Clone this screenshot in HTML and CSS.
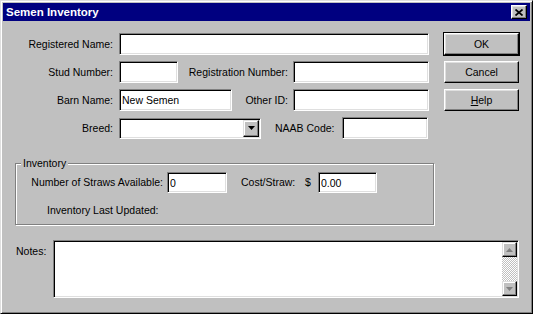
FILE: index.html
```html
<!DOCTYPE html>
<html lang="en">
<head>
    <meta charset="UTF-8">
    <title>Semen Inventory</title>
    <link rel="stylesheet" href="styles.css">
</head>
<body>
    <div class="window">
        <div class="titlebar">
            <span class="title">Semen Inventory</span>
            <span class="close-btn">
                <svg width="8" height="7" viewBox="0 0 8 7"><path d="M0.5 0.5l7 6M7.5 0.5l-7 6" stroke="#000" stroke-width="1.7"/></svg>
            </span>
        </div>

        <div class="client">
            <div class="top">
                <div class="fields">
                    <div class="row">
                        <label class="lbl lbl-main">Registered Name:</label>
                        <input class="field" style="width:310px" type="text" value="">
                    </div>
                    <div class="row">
                        <label class="lbl lbl-main">Stud Number:</label>
                        <input class="field" style="width:59px" type="text" value="">
                        <label class="lbl lbl-mid" style="width:110px">Registration Number:</label>
                        <input class="field" style="width:136px" type="text" value="">
                    </div>
                    <div class="row">
                        <label class="lbl lbl-main">Barn Name:</label>
                        <input class="field" style="width:113px" type="text" value="New Semen">
                        <label class="lbl lbl-mid" style="width:56px">Other ID:</label>
                        <input class="field" style="width:136px" type="text" value="">
                    </div>
                    <div class="row">
                        <label class="lbl lbl-main">Breed:</label>
                        <div class="select">
                            <span class="select-val"></span>
                            <span class="select-btn">
                                <svg width="7" height="4" viewBox="0 0 7 4"><path d="M0 0h7L3.5 4z" fill="#000"/></svg>
                            </span>
                        </div>
                        <label class="lbl lbl-naab">NAAB Code:</label>
                        <input class="field" style="width:86px" type="text" value="">
                    </div>
                </div>

                <div class="buttons">
                    <button class="btn default">OK</button>
                    <button class="btn">Cancel</button>
                    <button class="btn"><u>H</u>elp</button>
                </div>
            </div>

            <div class="group">
                <span class="group-title">Inventory</span>
                <div class="g-row">
                    <label class="lbl lbl-straws">Number of Straws Available:</label>
                    <input class="field" style="width:60px" type="text" value="0">
                    <label class="lbl lbl-cost">Cost/Straw:</label>
                    <span class="dollar">$</span>
                    <input class="field" style="width:59px" type="text" value="0.00">
                </div>
                <div class="g-row2">Inventory Last Updated:</div>
            </div>

            <div class="notes">
                <label class="lbl notes-lbl">Notes:</label>
                <div class="memo">
                    <div class="memo-text"></div>
                    <div class="scrollbar">
                        <span class="sb-btn">
                            <svg width="7" height="4" viewBox="0 0 7 4"><path d="M3.5 0L7 4H0z" fill="#808080"/></svg>
                        </span>
                        <span class="sb-track"></span>
                        <span class="sb-btn">
                            <svg width="7" height="4" viewBox="0 0 7 4"><path d="M0 0h7L3.5 4z" fill="#808080"/></svg>
                        </span>
                    </div>
                </div>
            </div>
        </div>
    </div>
</body>
</html>
```

FILE: styles.css
```css
:root {
    --face: #c0c0c0;
    --shadow: #808080;
    --light: #dfdfdf;
    --title: #000080;
}

* {
    margin: 0;
    padding: 0;
    box-sizing: border-box;
}

body {
    font-family: "Liberation Sans", Arial, sans-serif;
    font-size: 10.5px;
    line-height: 13px;
    color: #000;
    background: var(--face);
}

.window {
    width: 533px;
    height: 314px;
    background: var(--face);
    border: 1px solid;
    border-color: var(--light) #000 #000 var(--light);
    box-shadow: inset 1px 1px #fff, inset -1px -1px var(--shadow);
    padding: 2px;
}

.titlebar {
    height: 18px;
    background: var(--title);
    color: #fff;
    display: flex;
    align-items: center;
    justify-content: space-between;
    padding: 0 3px;
}

.title {
    font-weight: bold;
    font-size: 11.5px;
}

.close-btn {
    width: 16px;
    height: 14px;
    background: var(--face);
    border: 1px solid;
    border-color: #fff #000 #000 #fff;
    box-shadow: inset -1px -1px var(--shadow), inset 1px 1px var(--light);
    display: flex;
    align-items: center;
    justify-content: center;
}

.client {
    padding: 12px 0 0 7px;
}

.top {
    display: flex;
}

.fields {
    width: 419px;
    display: flex;
    flex-direction: column;
    gap: 6px;
}

.row {
    display: flex;
    align-items: center;
    height: 22px;
}

.lbl {
    flex: none;
    white-space: nowrap;
}

.lbl-main {
    width: 103px;
    text-align: right;
    margin-right: 6px;
}

.lbl-mid {
    text-align: right;
    margin-right: 5px;
}

.lbl-naab {
    margin-left: 14px;
    width: 62px;
    margin-right: 5px;
}

.field {
    flex: none;
    height: 22px;
    background: #fff;
    border: 1px solid;
    border-color: var(--shadow) #fff #fff var(--shadow);
    box-shadow: inset 1px 1px #000, inset -1px -1px var(--light);
    font: inherit;
    color: #000;
    padding: 0 2px;
    outline: none;
}

.select {
    flex: none;
    width: 142px;
    height: 21px;
    display: flex;
    background: #fff;
    border: 1px solid;
    border-color: var(--shadow) #fff #fff var(--shadow);
    box-shadow: inset 1px 1px #000, inset -1px -1px var(--light);
    padding: 1px;
}

.select-val {
    flex: 1;
}

.select-btn {
    width: 16px;
    background: var(--face);
    border: 1px solid;
    border-color: var(--light) #000 #000 var(--light);
    box-shadow: inset -1px -1px var(--shadow), inset 1px 1px #fff;
    display: flex;
    align-items: center;
    justify-content: center;
}

.buttons {
    margin-left: 15px;
    width: 75px;
    display: flex;
    flex-direction: column;
    gap: 6px;
}

.btn {
    height: 22px;
    font: inherit;
    color: #000;
    background: var(--face);
    border: 1px solid;
    border-color: #fff #000 #000 #fff;
    box-shadow: inset -1px -1px var(--shadow), inset 1px 1px var(--light);
}

.btn.default {
    outline: 1px solid #000;
}

/* Inventory group box */
.group {
    margin: 24px 0 0 5px;
    width: 419px;
    height: 62px;
    border: 1px solid var(--shadow);
    box-shadow: 1px 1px #fff, inset 1px 1px #fff;
    padding-left: 13px;
}

.group-title {
    display: table;
    margin: -7px 0 0 -8px;
    padding: 0 2px;
    background: var(--face);
}

.g-row {
    display: flex;
    align-items: center;
    height: 21px;
    margin-top: 2px;
}

.g-row .field {
    height: 21px;
}

.lbl-straws {
    width: 134px;
    text-align: right;
    margin-right: 4px;
}

.lbl-cost {
    margin-left: 14px;
    width: 58px;
}

.dollar {
    margin-left: 6px;
    width: 7px;
    margin-right: 6px;
}

.g-row2 {
    margin: 11px 0 0 18px;
}

/* Notes */
.notes {
    display: flex;
    margin-top: 15px;
}

.notes-lbl {
    width: 37px;
    margin-left: 6px;
    padding-top: 5px;
}

.memo {
    width: 466px;
    height: 58px;
    display: flex;
    background: #fff;
    border: 1px solid;
    border-color: var(--shadow) #fff #fff var(--shadow);
    box-shadow: inset 1px 1px #000, inset -1px -1px var(--light);
    padding: 1px;
}

.memo-text {
    flex: 1;
}

.scrollbar {
    width: 15px;
    display: flex;
    flex-direction: column;
    background: repeating-conic-gradient(var(--face) 0 25%, #fff 0 50%) 0 0 / 2px 2px;
}

.sb-btn {
    flex: none;
    height: 15px;
    background: var(--face);
    border: 1px solid;
    border-color: var(--light) #000 #000 var(--light);
    box-shadow: inset -1px -1px var(--shadow), inset 1px 1px #fff;
    display: flex;
    align-items: center;
    justify-content: center;
}

.sb-track {
    flex: 1;
}
```
